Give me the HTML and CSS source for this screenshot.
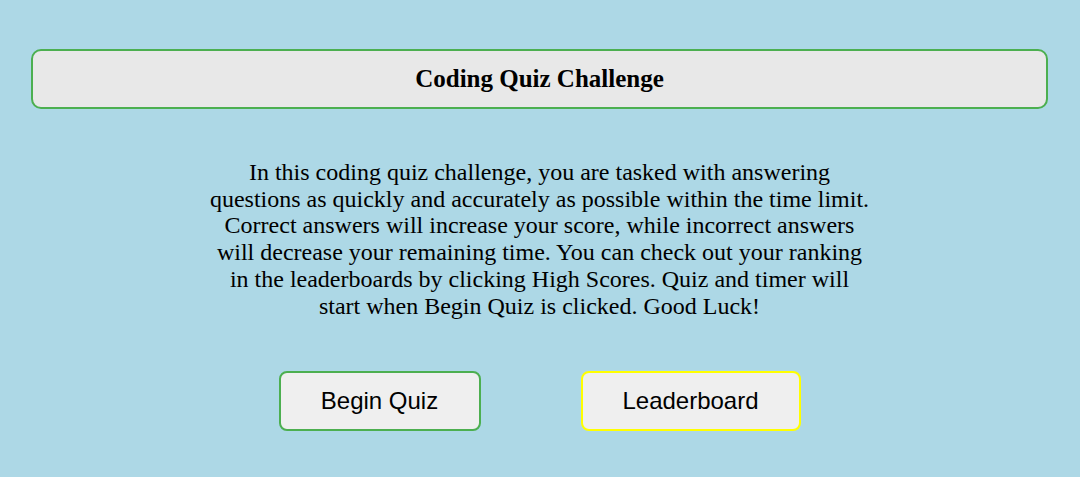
FILE: index.html
```html
<!DOCTYPE html>
<html>
<head>
<meta charset="utf-8">
<link rel="stylesheet" href="styles.css">
</head>
<body>
<header class="title-bar">
  <h1 class="title">Coding Quiz Challenge</h1>
</header>
<main class="intro">
  <p class="intro-text">In this coding quiz challenge, you are tasked with answering questions as quickly and accurately as possible within the time limit. Correct answers will increase your score, while incorrect answers will decrease your remaining time. You can check out your ranking in the leaderboards by clicking High Scores. Quiz and timer will start when Begin Quiz is clicked. Good Luck!</p>
  <div class="actions">
    <button class="btn btn-begin">Begin Quiz</button>
    <button class="btn btn-board">Leaderboard</button>
  </div>
</main>
</body>
</html>
```

FILE: styles.css
```css
html, body {
  margin: 0;
  padding: 0;
}
body {
  background: #add8e6;
  font-family: "Liberation Serif", "Times New Roman", serif;
  color: #000;
  padding: 49px 32px 0 31px;
}
.title-bar {
  background: #e8e8e8;
  border: 2px solid #4caf50;
  border-radius: 10px;
  height: 56px;
  display: flex;
  align-items: center;
  justify-content: center;
}
.title {
  margin: 0;
  font-size: 25px;
  font-weight: bold;
}
.intro {
  display: flex;
  flex-direction: column;
  align-items: center;
}
.intro-text {
  width: 664px;
  margin: 50px 0 0 0;
  text-align: center;
  font-size: 24px;
  line-height: 26.7px;
}
.actions {
  display: flex;
  gap: 100px;
  margin-top: 52px;
}
.btn {
  font-family: "Liberation Sans", Arial, sans-serif;
  font-size: 24px;
  background: #efefef;
  border: 2px solid #4caf50;
  border-radius: 8px;
  height: 60px;
  padding: 0;
  color: #000;
}
.btn-begin {
  width: 202px;
}
.btn-board {
  width: 220px;
  border-color: #ffff00;
}
```
